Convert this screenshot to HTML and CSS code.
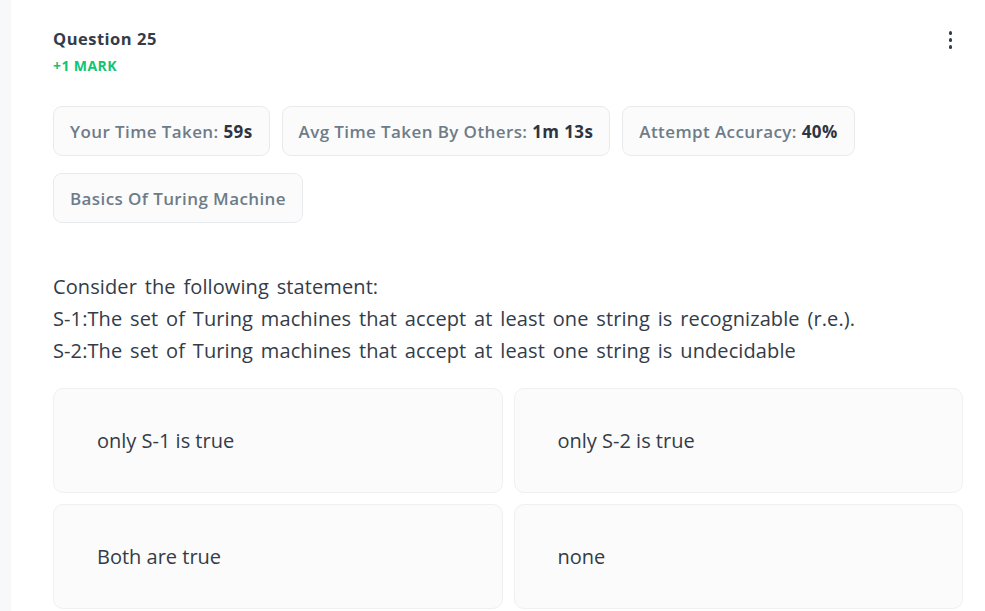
FILE: index.html
```html
<!DOCTYPE html>
<html>
<head>
<meta charset="utf-8">
<link rel="stylesheet" href="styles.css">
</head>
<body>
<div class="page">
  <div class="strip"></div>
  <main class="card">
    <header class="head">
      <div class="title-block">
        <div class="title">Question 25</div>
        <div class="mark">+1 MARK</div>
      </div>
      <div class="kebab"><span></span><span></span><span></span></div>
    </header>
    <div class="chips">
      <div class="chip">Your Time Taken: <b>59s</b></div>
      <div class="chip">Avg Time Taken By Others: <b>1m 13s</b></div>
      <div class="chip">Attempt Accuracy: <b>40%</b></div>
      <div class="chip">Basics Of Turing Machine</div>
    </div>
    <div class="question">
      <p>Consider the following statement:</p>
      <p>S-1:The set of Turing machines that accept at least one string is recognizable (r.e.).</p>
      <p>S-2:The set of Turing machines that accept at least one string is undecidable</p>
    </div>
    <div class="options">
      <div class="option">only S-1 is true</div>
      <div class="option">only S-2 is true</div>
      <div class="option">Both are true</div>
      <div class="option">none</div>
    </div>
  </main>
</div>
</body>
</html>
```

FILE: styles.css
```css
* { box-sizing: border-box; }
html, body { margin: 0; padding: 0; background: #ffffff; }
body {
  font-family: "Open Sans", "Noto Sans", sans-serif;
  color: #333c48;
  height: 611px;
  overflow: hidden;
}
.page { display: flex; min-height: 611px; }
.strip { width: 11px; flex: none; background: #f7f8f9; }
.card { flex: 1; padding: 28px 22px 0 42px; }
.head { display: flex; justify-content: space-between; align-items: flex-start; }
.title { font-size: 16.5px; font-weight: 700; color: #333c48; line-height: 22px; letter-spacing: 0.5px; }
.mark { font-size: 14px; font-weight: 700; color: #10c475; margin-top: 7px; line-height: 17px; letter-spacing: 0.4px; }
.kebab { display: flex; flex-direction: column; gap: 3.5px; padding-top: 3px; margin-right: 11px; }
.kebab span { width: 3.5px; height: 3.5px; border-radius: 50%; background: #333c48; display: block; }
.chips { display: flex; flex-wrap: wrap; gap: 17px 12px; margin-top: 32px; max-width: 820px; }
.chip {
  height: 50px;
  padding: 0 16px;
  display: flex; align-items: center;
  border: 1px solid #e8ebee;
  border-radius: 9px;
  background: #fbfbfc;
  font-size: 17px;
  font-weight: 600;
  letter-spacing: 0.4px;
  color: #6e7c88;
  white-space: pre;
}
.chip b { color: #2d3540; font-weight: 700; }
.question { margin-top: 48px; font-size: 20px; line-height: 32px; color: #333c48; letter-spacing: 0.1px; word-spacing: 2.5px; }
.question p { margin: 0; }
.options {
  display: grid; grid-template-columns: 1fr 1fr; gap: 11px;
  margin-top: 21px;
}
.option {
  height: 105px;
  display: flex; align-items: center;
  padding: 0 43px;
  background: #fbfbfb;
  border: 1px solid #f0f0f1;
  border-radius: 10px;
  font-size: 20px;
  color: #333c48;
}
```
